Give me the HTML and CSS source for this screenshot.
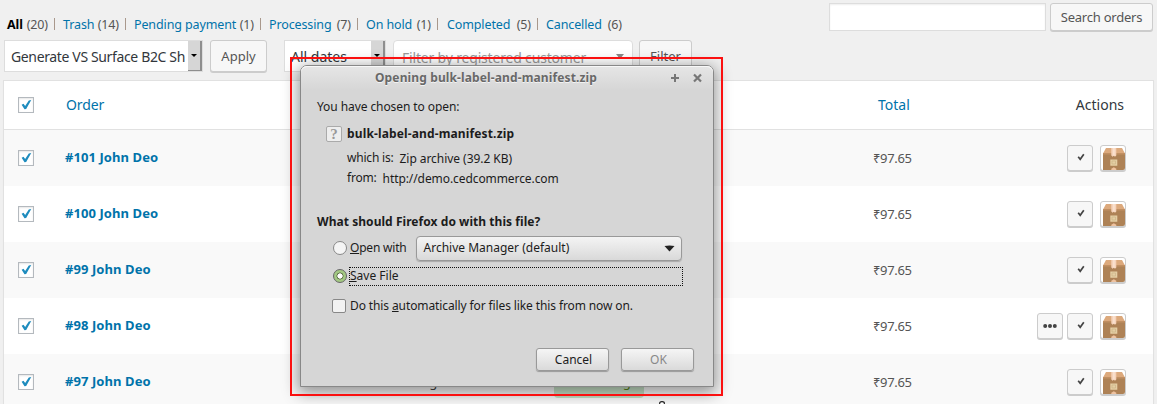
FILE: index.html
```html
<!DOCTYPE html>
<html lang="en">
<head>
<meta charset="utf-8">
<title>Orders</title>
<link rel="stylesheet" href="styles.css">
</head>
<body>
<svg class="defs" width="0" height="0">
  <symbol id="tick" viewBox="0 0 16 16"><path d="M3 7.6 5.2 6.5 7 9.1 11.2 2.8 14 2.3 8.2 12.5 6.3 12.9Z" fill="#1e8cbe"/></symbol>
  <symbol id="done" viewBox="0 0 8 8"><path d="M1.2 3.8 3.2 6.3 6.8 1.2" fill="none" stroke="#444" stroke-width="1.7"/></symbol>
  <symbol id="box" viewBox="0 0 22 23">
    <path d="M3 1H19L22 6.5H0Z" fill="#dca97c"/>
    <path d="M0 6H22V23H0Z" fill="#ae8256"/>
    <path d="M0 6H22V7.5H0Z" fill="#c18f62"/>
    <path d="M8.3 1H13.3V8.5L12 9.7 10.8 8.7 9.5 9.7 8.3 8.5Z" fill="#f5d3bb"/>
    <path d="M10.2 1H11.6V8.5H10.2Z" fill="#fbe4d4"/>
    <path d="M7.3 12.5H14.3V18.7H7.3Z" fill="#e4cea4"/>
    <path d="M9 14H12.5V17H9Z" fill="none" stroke="#cdb588" stroke-width=".7"/>
    <path d="M8.3 23V21.8L10.8 20.3 13.3 21.8V23Z" fill="#efc29f"/>
  </symbol>
</svg>
<div class="page">
  <header class="top">
    <nav class="views">
      <span class="v1"><b>All</b><i>(20)</i></span>
      <span class="v2"><a>Trash</a><i>(14)</i></span>
      <span class="v3"><a>Pending payment</a><i>(1)</i></span>
      <span class="v4"><a>Processing</a><i>(7)</i></span>
      <span class="v5"><a>On hold</a><i>(1)</i></span>
      <span class="v6"><a>Completed</a><i>(5)</i></span>
      <span class="v7"><a>Cancelled</a><i>(6)</i></span>
    </nav>
    <div class="search"><div class="field"></div><div class="btn"><span class="t-search">Search orders</span></div></div>
  </header>
  <div class="tools">
    <div class="select bulk"><span class="t-bulk">Generate VS Surface B2C Sh</span><em></em></div>
    <div class="btn apply"><span class="t-apply">Apply</span></div>
    <div class="select dates"><span class="t-dates">All dates</span><em></em></div>
    <div class="customer"><span class="t-cust">Filter by registered customer</span><u></u></div>
    <div class="btn filter"><span class="t-filter">Filter</span></div>
  </div>
  <main class="table">
    <div class="row head"><svg class="cb"><use href="#tick"/></svg><a class="t-order">Order</a><span></span><span></span><a class="t-total">Total</a><span class="t-actions">Actions</span></div>
    <div class="row odd"><svg class="cb"><use href="#tick"/></svg><a class="name">#101 John Deo</a><span></span><span></span><span class="price">₹97.65</span><div class="acts"><div class="act"><svg class="done"><use href="#done"/></svg></div><div class="act pack"><svg><use href="#box"/></svg></div></div></div>
    <div class="row"><svg class="cb"><use href="#tick"/></svg><a class="name">#100 John Deo</a><span></span><span></span><span class="price">₹97.65</span><div class="acts"><div class="act"><svg class="done"><use href="#done"/></svg></div><div class="act pack"><svg><use href="#box"/></svg></div></div></div>
    <div class="row odd"><svg class="cb"><use href="#tick"/></svg><a class="name">#99 John Deo</a><span></span><span></span><span class="price">₹97.65</span><div class="acts"><div class="act"><svg class="done"><use href="#done"/></svg></div><div class="act pack"><svg><use href="#box"/></svg></div></div></div>
    <div class="row"><svg class="cb"><use href="#tick"/></svg><a class="name">#98 John Deo</a><span></span><span></span><span class="price">₹97.65</span><div class="acts"><div class="act"><svg class="dots" viewBox="0 0 14 4"><circle cx="2.2" cy="2" r="2"/><circle cx="7" cy="2" r="2"/><circle cx="11.8" cy="2" r="2"/></svg></div><div class="act"><svg class="done"><use href="#done"/></svg></div><div class="act pack"><svg><use href="#box"/></svg></div></div></div>
    <div class="row odd"><svg class="cb"><use href="#tick"/></svg><a class="name">#97 John Deo</a><span class="date">Aug</span><span class="pill">Processing</span><span class="price">₹97.65</span><div class="acts"><div class="act"><svg class="done"><use href="#done"/></svg></div><div class="act pack"><svg><use href="#box"/></svg></div></div></div>
  </main>
</div>
<section class="dialog">
  <div class="title"><b class="t-title">Opening bulk-label-and-manifest.zip</b>
    <svg class="winbtns" width="32" height="10" viewBox="0 0 32 10"><path d="M1 5H9M5 1V9" stroke="#777" stroke-width="2"/><path d="M24 1.5 31 8.5M31 1.5 24 8.5" stroke="#777" stroke-width="2.2"/></svg>
  </div>
  <div class="body">
    <p class="chosen"><span class="t-chosen">You have chosen to open:</span></p>
    <div class="file"><span class="q">?</span><b class="t-file">bulk-label-and-manifest.zip</b></div>
    <p class="info"><span class="t-which">which is:</span><span class="t-zip">Zip archive (39.2 KB)</span></p>
    <p class="info from"><span class="t-from">from:</span><span class="t-url">http://demo.cedcommerce.com</span></p>
    <p class="what"><b class="t-what">What should Firefox do with this file?</b></p>
    <div class="opt"><span class="radio"></span><span class="t-open"><u>O</u>pen with</span><div class="combo"><span class="t-combo">Archive Manager (default)</span><svg width="11" height="7" viewBox="0 0 11 7"><path d="M.5 1Q5.5 0 10.5 1L5.5 6.5Z" fill="#222"/></svg></div></div>
    <div class="opt save"><span class="radio on"></span><div class="focus"><span class="t-save"><u>S</u>ave File</span></div></div>
    <div class="opt auto"><span class="check"></span><span class="t-auto">Do this <u>a</u>utomatically for files like this from now on.</span></div>
    <div class="btns"><span class="dbtn"><span class="t-cancel">Cancel</span></span><span class="dbtn ok"><span class="t-ok">OK</span></span></div>
  </div>
</section>
<div class="frame"></div>
<svg class="cursor" width="6" height="3" viewBox="0 0 6 3"><path d="M.7 3V2Q.7.6 3 .6T5.3 2V3" fill="#fff" stroke="#111" stroke-width="1.1"/></svg>
</body>
</html>
```
FILE: styles.css
```css
* { box-sizing: border-box; }
body { margin: 0; width: 1157px; height: 404px; overflow: hidden; background: #f0f0f0; font: 13px/18px "Noto Sans", "Open Sans", sans-serif; color: #444; white-space: nowrap; }
.defs { position: absolute; }
.page { height: 404px; overflow: hidden; padding: 3px 3px 0; }
a { color: #0073aa; }
i { font-style: normal; color: #555; }
.top { display: flex; justify-content: space-between; height: 37px; }
.views { display: flex; padding: 13px 0 0 4px; height: 31px; font-size: 12.5px; letter-spacing: -.12px; }
.views span { position: relative; display: flex; justify-content: space-between; height: 18px; }
.views span:not(:last-child)::after { content: ""; position: absolute; right: -7px; top: 2px; width: 1px; height: 12px; background: #a9988c; }
.views b { color: #000; }
.v1 { width: 41px; margin-right: 15px; }
.v2 { width: 56px; margin-right: 15px; }
.v3 { width: 120px; margin-right: 15px; }
.v4 { width: 82px; margin-right: 15px; }
.v5 { width: 65px; margin-right: 16px; }
.v6 { width: 84px; margin-right: 15px; }
.v7 { width: 76px; }
.search { display: flex; gap: 4px; padding-right: 1px; }
.field { width: 217px; height: 28px; background: #fff; border: 1px solid #ddd; box-shadow: inset 0 1px 2px rgba(0,0,0,.07); }
.btn { display: flex; align-items: center; justify-content: center; background: #f7f7f7; border: 1px solid #ccc; border-radius: 3px; box-shadow: 0 1px 0 #ccc; color: #555; height: 32px; }
.search .btn { width: 103px; height: 28px; }
.t-search { letter-spacing: -.22px; }
.tools { display: flex; height: 40px; padding-left: 1px; align-items: flex-start; }
.select { display: flex; justify-content: space-between; align-items: center; height: 32px; background: #fff; border: 1px solid #ddd; padding-left: 6px; font-size: 14px; color: #32373c; overflow: hidden; }
.select span { padding-top: 2px; }
.t-bulk { letter-spacing: -.36px; }
.t-cust { letter-spacing: -.18px; }
.select em { flex: none; width: 14px; height: 30px; background: #d6d6d6; border-right: 2px solid #8e8e8e; border-bottom: 1px solid #8e8e8e; display: flex; align-items: center; justify-content: center; }
.select em::after { content: ""; border: 3px solid transparent; border-top-color: #000; border-bottom: 0; }
.bulk { width: 199px; margin-right: 7px; }
.apply { width: 57px; margin-right: 17px; }
.dates { width: 102px; margin-right: 7px; }
.customer { display: flex; justify-content: space-between; align-items: center; width: 240px; height: 36px; background: #fff; border: 1px solid #ddd; border-radius: 4px; padding: 0 8px; margin-right: 6px; color: #999; font-size: 14px; }
.customer u { border: 4px solid transparent; border-top: 5px solid #888; border-bottom: 0; margin-top: -4px; }
.filter { width: 53px; }
.table { height: 340px; background: #fff; border: 1px solid #e1e1e1; width: 1151px; box-shadow: 0 1px 1px rgba(0,0,0,.04); }
.row { display: grid; grid-template-columns: 61px 350px 128px 330px 110px 170px; align-items: center; height: 56px; }
.row > * { justify-self: start; }
.head { height: 49px; border-bottom: 1px solid #e1e1e1; font-size: 14px; color: #32373c; }
.odd { background: #f9f9f9; }
.cb { width: 16px; height: 16px; margin-left: 14px; border: 1px solid #b4b9be; background: #fff; box-shadow: inset 0 1px 2px rgba(0,0,0,.1); }
.t-order { margin-left: 1px; letter-spacing: -.1px; }
.name { font-weight: 700; letter-spacing: .08px; margin-top: -2px; }
.price { color: #555; letter-spacing: -.35px; }
.t-total { margin-left: 5px; }
.head .t-actions { justify-self: end; margin-right: 29px; }
.acts { display: flex; gap: 4px; }
.row .acts { justify-self: end; padding-right: 27px; }
.act { display: flex; align-items: center; justify-content: center; width: 26px; height: 26px; background: #f7f7f7; border: 1px solid #ccc; border-radius: 3px; box-shadow: 0 1px 0 #ccc; }
.pack { margin-left: 3px; align-items: flex-end; justify-content: flex-end; background: #fff; overflow: hidden; }
.pack svg { flex: none; width: 22px; height: 23px; }
.done { width: 8px; height: 8px; margin: -2px 0 0 2px; }
.dots { width: 14px; height: 4px; fill: #444; }
.date { margin-left: -2px; }
.pill { display: flex; justify-content: center; width: 90px; height: 32px; line-height: 32px; background: #c6e1c6; color: #5b841b; border-radius: 4px; margin-left: 11px; padding-right: 3px; }
.frame { position: absolute; left: 290px; top: 57px; width: 433px; height: 339px; border: 2px solid #fb1010; }
.cursor { position: absolute; left: 659px; top: 401px; }
.dialog { position: absolute; left: 300px; top: 65px; width: 414px; height: 322px; background: #d6d6d6; border: 1px solid #888; border-radius: 7px 7px 0 0; box-shadow: inset 0 1px #f5f5f5, 0 4px 16px 2px rgba(0,0,0,.42); color: #1c1c1c; font-size: 12px; }
.title { display: flex; height: 24px; align-items: center; padding-left: 74px; background: linear-gradient(#e6e6e6, #d6d6d6); border-radius: 6px 6px 0 0; box-shadow: inset 0 1px #f8f8f8; color: #686868; text-shadow: 0 1px #f3f3f3; }
.t-title { letter-spacing: .13px; }
.t-chosen { letter-spacing: -.08px; }
.t-file { letter-spacing: .14px; }
.t-what { letter-spacing: .05px; }
.t-which, .t-from { letter-spacing: -.2px; }
.t-zip { letter-spacing: -.05px; }
.t-url { letter-spacing: -.08px; }
.t-open { letter-spacing: -.2px; }
.t-auto { letter-spacing: -.11px; }
.winbtns { margin: 0 11px 0 auto; }
.body { padding: 8px 16px 0; }
p { margin: 0; height: 18px; }
.file { display: flex; align-items: center; padding-left: 9px; gap: 5px; height: 18px; margin-top: 9px; }
.q { width: 16px; height: 16px; border: 1px solid #aaa; border-radius: 2px; background: #eee; color: #999; font: 700 15px/15px "Liberation Serif", serif; text-align: center; }
.info { display: flex; padding-left: 30px; gap: 6px; margin-top: 6px; }
.info span + span { margin-top: 1px; }
.from { margin-top: 2px; }
.what { margin-top: 26px; }
.opt { display: flex; align-items: center; height: 26px; padding-left: 16px; margin-top: 4px; }
.radio { flex: none; width: 14px; height: 14px; border: 1px solid #888; border-radius: 50%; background: #f5f5f5; margin-right: 3px; }
.radio.on { border-color: #666; background: radial-gradient(circle, #fff 0 2.4px, #64754f 2.8px 3.3px, #a3c983 3.8px); }
.combo { display: flex; align-items: center; justify-content: space-between; width: 266px; height: 25px; margin-left: 9px; padding: 0 6px 0 7px; border: 1px solid #999; border-radius: 4px; background: linear-gradient(#f4f4f4, #d9d9d9); box-shadow: 0 1px 1px #aaa; }
.save { margin-top: 2px; }
.focus { flex: none; width: 334px; height: 19px; margin-left: -1px; border: 1px dotted #111; display: flex; align-items: center; }
.auto { margin-top: 4px; padding-left: 15px; }
.check { width: 14px; height: 14px; border: 1px solid #888; border-radius: 2px; background: #f2f2f2; margin-right: 4px; }
.btns { display: flex; gap: 12px; padding-left: 219px; margin-top: 29px; }
.dbtn { display: flex; align-items: center; justify-content: center; width: 73px; height: 23px; padding-left: 2px; border: 1px solid #999; border-radius: 3px; background: linear-gradient(#f5f5f5, #dadada); box-shadow: 0 1px 1px #999; }
.ok { color: #888; }
```
